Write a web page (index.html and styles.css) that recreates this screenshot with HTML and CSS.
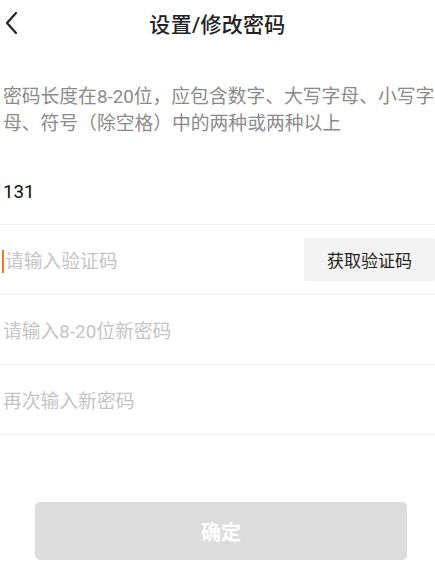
FILE: index.html
```html
<!DOCTYPE html>
<html lang="zh-CN">
<head>
    <meta charset="UTF-8">
    <meta name="viewport" content="width=device-width, initial-scale=1.0">
    <title>设置/修改密码</title>
    <link rel="stylesheet" href="styles.css">
</head>
<body>
    <div class="header">
        <a class="back" href="#">
            <svg width="14" height="24" viewBox="0 0 14 24">
                <path d="M12 2 L3 12 L12 22" fill="none" stroke="#222" stroke-width="2.2" stroke-linecap="round" stroke-linejoin="round"/>
            </svg>
        </a>
        <h1>设置/修改密码</h1>
    </div>
    <p class="tip">密码长度在8-20位，应包含数字、大写字母、小写字母、符号（除空格）中的两种或两种以上</p>
    <form class="form">
        <div class="row">
            <input class="field phone" type="text" value="131">
        </div>
        <div class="row">
            <span class="caret"></span>
            <input class="field" type="text" placeholder="请输入验证码">
            <button type="button" class="code-btn">获取验证码</button>
        </div>
        <div class="row">
            <input class="field" type="password" placeholder="请输入8-20位新密码">
        </div>
        <div class="row">
            <input class="field" type="password" placeholder="再次输入新密码">
        </div>
        <div class="actions">
            <button type="submit" class="btn" disabled>确定</button>
        </div>
    </form>
</body>
</html>
```

FILE: styles.css
```css
html, body {
    margin: 0;
    background: #fff;
    font-family: Roboto, "Noto Sans CJK SC", sans-serif;
    color: #222;
}
.header {
    position: relative;
    height: 48px;
    display: flex;
    justify-content: center;
    align-items: center;
    padding-bottom: 3px;
    box-sizing: border-box;
}
.back {
    position: absolute;
    left: 4px;
    top: 11px;
    display: block;
    width: 14px;
    height: 24px;
}
.header h1 {
    margin: 0;
    font-size: 21px;
    font-weight: 500;
    color: #222;
    letter-spacing: 0.3px;
}
.tip {
    margin: 36px 0 0;
    padding: 0 0 0 3px;
    font-size: 18.8px;
    line-height: 27px;
    color: #8a8a8a;
}
.form {
    margin-top: 17px;
}
.row {
    display: flex;
    align-items: center;
    height: 70px;
    border-bottom: 1px solid #f2f2f2;
    box-sizing: border-box;
    padding-left: 3px;
    padding-top: 4px;
}
.field {
    flex: 1;
    min-width: 0;
    border: none;
    outline: none;
    padding: 0;
    font-family: inherit;
    font-size: 18.8px;
    color: #111;
    background: transparent;
}
.field::placeholder {
    color: #c4c4c4;
}
.phone {
    color: #111;
}
.caret {
    width: 2px;
    height: 23px;
    background: #f07a1c;
    margin-left: -1px;
    margin-right: 1px;
}
.code-btn {
    width: 131px;
    height: 43px;
    margin-top: -4px;
    border: none;
    border-radius: 2px;
    background: #f3f3f3;
    font-family: inherit;
    font-size: 17px;
    color: #222;
    padding: 0;
}
.actions {
    padding: 67px 28px 0 35px;
}
.btn {
    display: block;
    width: 100%;
    height: 58px;
    border: none;
    border-radius: 5px;
    background: #dcdcdc;
    color: #fff;
    font-family: inherit;
    font-size: 20px;
    font-weight: 700;
}
```
